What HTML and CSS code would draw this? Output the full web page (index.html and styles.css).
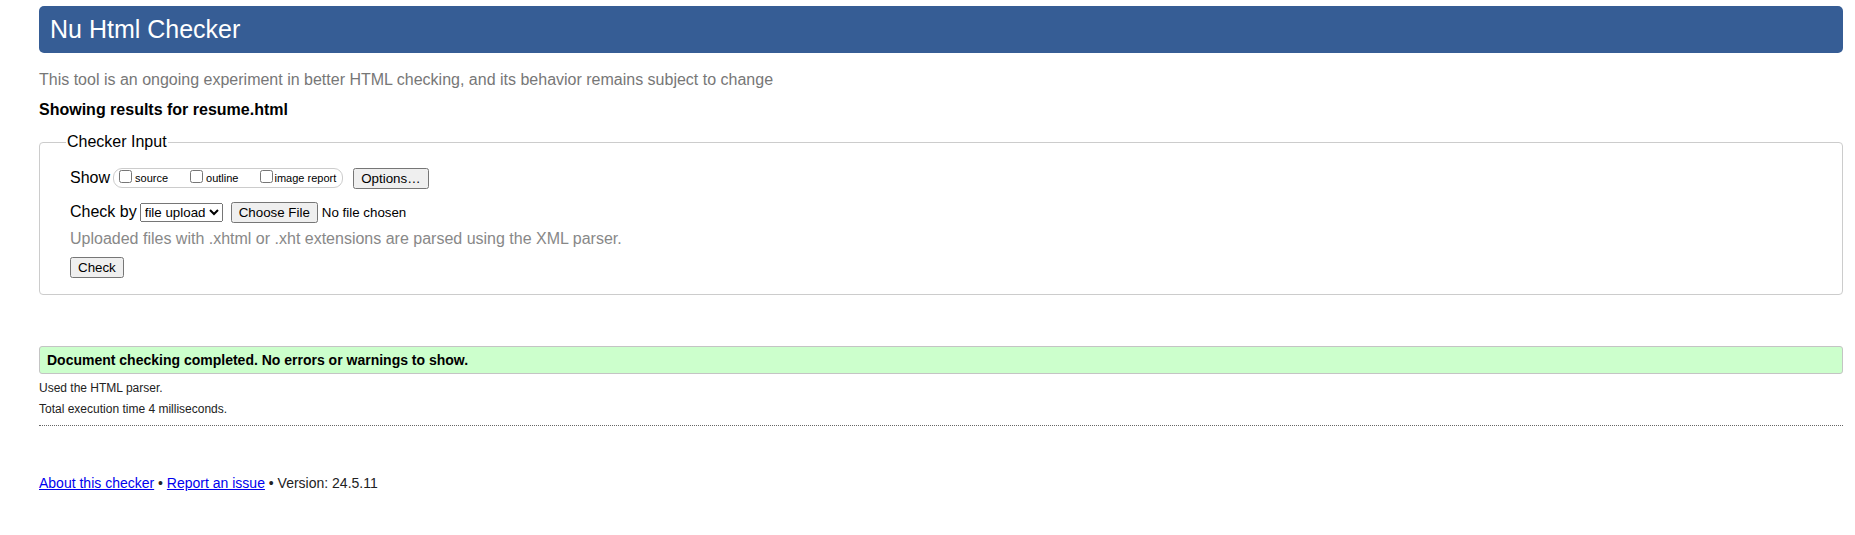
FILE: index.html
```html
<!DOCTYPE html>
<html lang="en">
<head>
<meta charset="utf-8">
<title>Showing results for resume.html - Nu Html Checker</title>
<link rel="stylesheet" href="styles.css">
</head>
<body>
<div class="page">
  <h1 class="title">Nu Html Checker</h1>
  <p class="intro">This tool is an ongoing experiment in better HTML checking, and its behavior remains subject to change</p>
  <p class="showing">Showing results for resume.html</p>
  <form class="checker">
    <fieldset class="input-set">
      <legend class="legend">Checker Input</legend>
      <div class="row show-row">
        <span class="row-label">Show</span>
        <span class="show-group">
          <label class="opt"><input type="checkbox" class="cb">source</label>
          <label class="opt"><input type="checkbox" class="cb">outline</label>
          <label class="opt"><input type="checkbox" class="cb">image report</label>
        </span>
        <button type="button" class="btn options">Options…</button>
      </div>
      <div class="row check-row">
        <span class="row-label">Check by</span>
        <select class="sel"><option>file upload</option></select>
        <input type="file" class="file">
      </div>
      <p class="note">Uploaded files with .xhtml or .xht extensions are parsed using the XML parser.</p>
      <div class="submit-row"><button type="button" class="btn check">Check</button></div>
    </fieldset>
  </form>
  <p class="success">Document checking completed. No errors or warnings to show.</p>
  <p class="details">Used the HTML parser.</p>
  <p class="details second">Total execution time 4 milliseconds.</p>
  <hr class="sep">
  <p class="footer"><a href="#">About this checker</a> • <a href="#">Report an issue</a> • Version: 24.5.11</p>
</div>
</body>
</html>
```
FILE: styles.css
```css
html, body {
  margin: 0;
  padding: 0;
  background: #fff;
}
body {
  font-family: "Liberation Sans", Arial, sans-serif;
  color: #000;
}
.page {
  padding: 6px 12px 0 39px;
}
.title {
  margin: 0;
  height: 47px;
  display: flex;
  align-items: center;
  padding-left: 11px;
  background: #365d95;
  color: #fff;
  font-size: 25px;
  font-weight: normal;
  border-radius: 5px;
}
.intro {
  margin: 18px 0 0;
  font-size: 16px;
  line-height: 18px;
  color: #777;
}
.showing {
  margin: 12px 0 0;
  font-size: 16px;
  line-height: 18px;
  font-weight: bold;
}
.checker {
  margin: 14px 0 0;
}
.input-set {
  margin: 0;
  border: 1px solid #ccc;
  border-radius: 4px;
  padding: 0 0 16px 30px;
  min-width: 0;
}
.legend {
  font-size: 16px;
  line-height: 18px;
  padding: 0 1px;
  margin-left: -4px;
}
.row {
  display: flex;
  align-items: center;
  height: 22px;
}
.show-row {
  margin-top: 16px;
}
.check-row {
  margin-top: 12px;
}
.row-label {
  font-size: 16px;
  margin-right: 3px;
}
.show-group {
  display: inline-flex;
  align-items: center;
  height: 18px;
  border: 1px solid #ccc;
  border-radius: 9px;
  padding: 0 6px 0 1px;
  margin-right: 10px;
  font-size: 11px;
}
.opt {
  display: inline-flex;
  align-items: center;
  margin-right: 18px;
}
.opt:last-child {
  margin-right: 0;
}
.cb {
  width: 13px;
  height: 13px;
  margin: 0 3px 0 4px;
  position: relative;
  top: -2px;
}
.opt:last-child .cb {
  margin-right: 1px;
}
.btn {
  font-family: "Liberation Sans", Arial, sans-serif;
  font-size: 13.333px;
}
.sel {
  font-family: "Liberation Sans", Arial, sans-serif;
  font-size: 13.333px;
  margin-right: 8px;
}
.file {
  font-family: "Liberation Sans", Arial, sans-serif;
  font-size: 13.333px;
}
.note {
  margin: 7px 0 0;
  font-size: 16px;
  line-height: 18px;
  color: #888;
}
.submit-row {
  margin-top: 9px;
  display: flex;
}
.success {
  margin: 51px 0 0;
  height: 26px;
  line-height: 26px;
  padding: 0 0 0 7px;
  background: #ccffcc;
  border: 1px solid #c4c4c4;
  border-radius: 3px;
  font-size: 14px;
  font-weight: bold;
}
.details {
  margin: 7px 0 0;
  font-size: 12px;
  line-height: 14px;
  color: #222;
}
.sep {
  margin: 9px 0 0;
  border: 0;
  border-top: 1px dotted #666;
  height: 0;
}
.footer {
  margin: 49px 0 0;
  font-size: 14px;
  line-height: 16px;
  color: #222;
}
.footer a {
  color: #0000ee;
}
```
